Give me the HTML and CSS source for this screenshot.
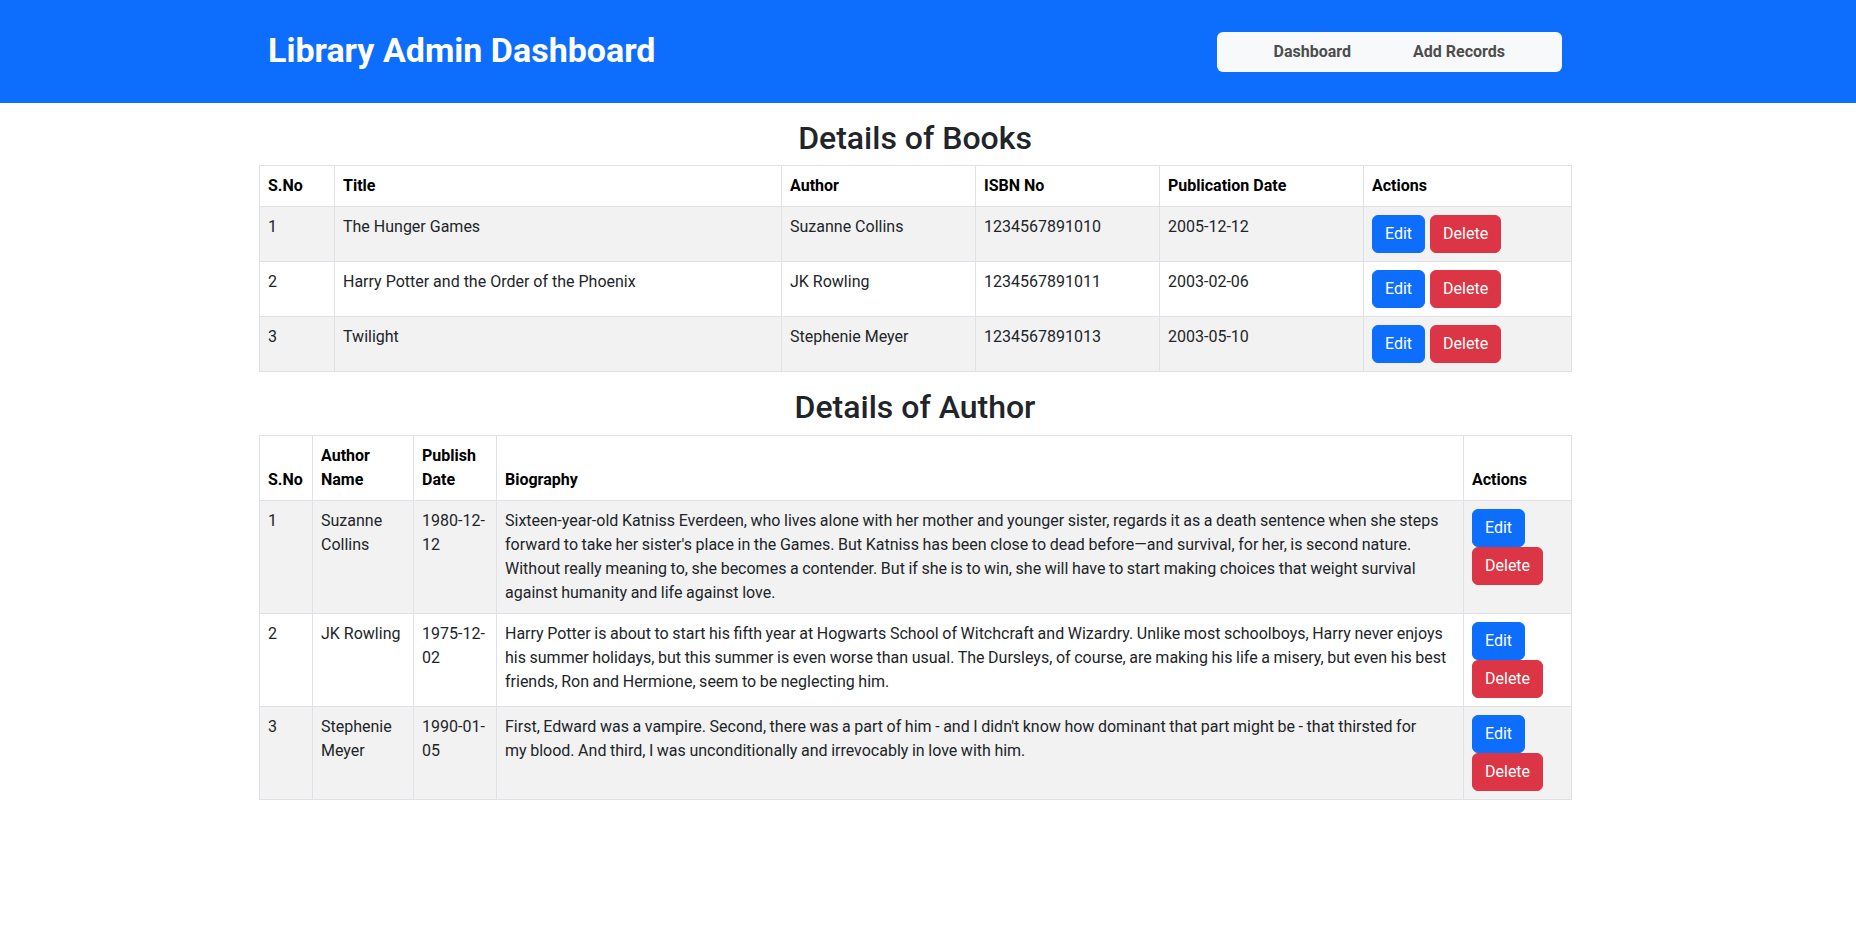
FILE: index.html
```html
<!DOCTYPE html>
<html lang="en">
<head>
<meta charset="utf-8">
<title>Library Admin Dashboard</title>
<link rel="stylesheet" href="styles.css">
</head>
<body>
<header class="topbar">
  <div class="topbar-inner">
    <h1 class="brand">Library Admin Dashboard</h1>
    <nav class="nav-box">
      <a class="nav-link" href="#">Dashboard</a>
      <a class="nav-link" href="#">Add Records</a>
    </nav>
  </div>
</header>
<main class="page">
  <section class="block">
    <h2 class="section-title">Details of Books</h2>
    <table class="data-table books">
      <thead>
        <tr>
          <th class="c-sno">S.No</th>
          <th class="c-title">Title</th>
          <th class="c-author">Author</th>
          <th class="c-isbn">ISBN No</th>
          <th class="c-pub">Publication Date</th>
          <th class="c-act">Actions</th>
        </tr>
      </thead>
      <tbody>
        <tr>
          <td>1</td><td>The Hunger Games</td><td>Suzanne Collins</td><td>1234567891010</td><td>2005-12-12</td>
          <td><div class="actions"><button class="btn btn-edit">Edit</button><button class="btn btn-delete">Delete</button></div></td>
        </tr>
        <tr>
          <td>2</td><td>Harry Potter and the Order of the Phoenix</td><td>JK Rowling</td><td>1234567891011</td><td>2003-02-06</td>
          <td><div class="actions"><button class="btn btn-edit">Edit</button><button class="btn btn-delete">Delete</button></div></td>
        </tr>
        <tr>
          <td>3</td><td>Twilight</td><td>Stephenie Meyer</td><td>1234567891013</td><td>2003-05-10</td>
          <td><div class="actions"><button class="btn btn-edit">Edit</button><button class="btn btn-delete">Delete</button></div></td>
        </tr>
      </tbody>
    </table>
  </section>
  <section class="block">
    <h2 class="section-title">Details of Author</h2>
    <table class="data-table authors">
      <thead>
        <tr>
          <th class="a-sno">S.No</th>
          <th class="a-name">Author Name</th>
          <th class="a-date">Publish Date</th>
          <th class="a-bio">Biography</th>
          <th class="a-act">Actions</th>
        </tr>
      </thead>
      <tbody>
        <tr>
          <td>1</td><td>Suzanne Collins</td><td>1980-12-12</td>
          <td class="bio">Sixteen-year-old Katniss Everdeen, who lives alone with her mother and younger sister, regards it as a death sentence when she steps forward to take her sister's place in the Games. But Katniss has been close to dead before—and survival, for her, is second nature. Without really meaning to, she becomes a contender. But if she is to win, she will have to start making choices that weight survival against humanity and life against love.</td>
          <td><div class="actions"><button class="btn btn-edit">Edit</button><button class="btn btn-delete">Delete</button></div></td>
        </tr>
        <tr>
          <td>2</td><td>JK Rowling</td><td>1975-12-02</td>
          <td class="bio">Harry Potter is about to start his fifth year at Hogwarts School of Witchcraft and Wizardry. Unlike most schoolboys, Harry never enjoys his summer holidays, but this summer is even worse than usual. The Dursleys, of course, are making his life a misery, but even his best friends, Ron and Hermione, seem to be neglecting him.</td>
          <td><div class="actions"><button class="btn btn-edit">Edit</button><button class="btn btn-delete">Delete</button></div></td>
        </tr>
        <tr>
          <td>3</td><td>Stephenie Meyer</td><td>1990-01-05</td>
          <td class="bio">First, Edward was a vampire. Second, there was a part of him - and I didn't know how dominant that part might be - that thirsted for my&nbsp;blood. And third, I was unconditionally and irrevocably in love with him.</td>
          <td><div class="actions"><button class="btn btn-edit">Edit</button><button class="btn btn-delete">Delete</button></div></td>
        </tr>
      </tbody>
    </table>
  </section>
</main>
</body>
</html>
```

FILE: styles.css
```css
*, *::before, *::after { box-sizing: border-box; }

html, body {
  margin: 0;
  padding: 0;
  background: #ffffff;
}

body {
  font-family: Roboto, "Liberation Sans", Arial, sans-serif;
  font-size: 16px;
  line-height: 1.5;
  color: #212529;
  padding-right: 26px;
}

.topbar {
  background: #0d6efd;
  height: 103px;
  margin-right: -26px;
  padding-right: 26px;
}

.topbar-inner {
  width: 1294px;
  height: 100%;
  margin: 0 auto;
  display: flex;
  align-items: center;
  justify-content: space-between;
}

.brand {
  margin: 0;
  color: #ffffff;
  font-size: 34px;
  font-weight: 700;
  line-height: 1.2;
  padding-bottom: 3px;
}

.nav-box {
  display: flex;
  align-items: center;
  background: #f8f9fa;
  border-radius: 6px;
  height: 40px;
  padding: 0 26px;
}

.nav-link {
  color: #4d4d4d;
  font-weight: 700;
  text-decoration: none;
  padding: 0 31px;
  line-height: 24px;
}

.page {
  width: 1312px;
  margin: 0 auto;
  padding-top: 16px;
}

.block { display: block; }

.section-title {
  margin: 0 0 8px 0;
  text-align: center;
  font-size: 32px;
  font-weight: 500;
  line-height: 1.2;
  color: #212529;
}

.data-table {
  width: 100%;
  table-layout: fixed;
  border-collapse: collapse;
  margin-bottom: 16px;
  border: 1px solid #dee2e6;
}

.data-table th,
.data-table td {
  border: 1px solid #dee2e6;
  padding: 8px;
  text-align: left;
  vertical-align: top;
}

.data-table thead th {
  vertical-align: bottom;
  font-weight: 700;
  color: #000000;
}

.data-table tbody tr:nth-child(odd) td {
  background: #f2f2f2;
}

.bio { word-spacing: -0.4px; }

.c-sno { width: 75px; }
.c-title { width: 447px; }
.c-author { width: 194px; }
.c-isbn { width: 184px; }
.c-pub { width: 204px; }
.c-act { width: 208px; }

.a-sno { width: 53px; }
.a-name { width: 101px; }
.a-date { width: 83px; }
.a-bio { width: 967px; }
.a-act { width: 108px; }

.actions {
  display: flex;
  flex-wrap: wrap;
  column-gap: 5px;
  row-gap: 0;
}

.btn {
  font-family: inherit;
  font-size: 16px;
  line-height: 24px;
  padding: 6px 12px;
  border: 1px solid transparent;
  border-radius: 6px;
  color: #ffffff;
  cursor: pointer;
}

.btn-edit { background: #0d6efd; border-color: #0d6efd; }
.btn-delete { background: #dc3545; border-color: #dc3545; }
```
